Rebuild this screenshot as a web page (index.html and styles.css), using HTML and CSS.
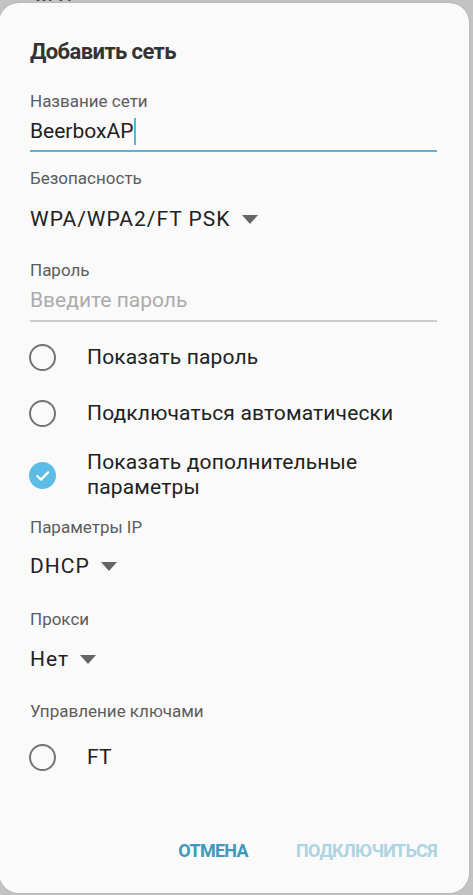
FILE: index.html
```html
<!DOCTYPE html>
<html lang="ru">
<head>
<meta charset="utf-8">
<link rel="stylesheet" href="styles.css">
</head>
<body>
<div class="behind"><span class="behind-text">Wi-Fi</span></div>
<div class="dialog">
  <div class="title">Добавить сеть</div>

  <div class="label first-label">Название сети</div>
  <div class="value input-value">BeerboxAP<span class="cursor"></span></div>
  <div class="line active-line"></div>

  <div class="label sec-label">Безопасность</div>
  <div class="value select">WPA/WPA2/FT PSK<span class="tri"></span></div>

  <div class="label pass-label">Пароль</div>
  <div class="placeholder">Введите пароль</div>
  <div class="line idle-line"></div>

  <div class="radio-row row-first"><span class="radio"></span><span class="radio-text">Показать пароль</span></div>
  <div class="radio-row"><span class="radio"></span><span class="radio-text">Подключаться автоматически</span></div>
  <div class="radio-row tall-row"><span class="radio checked"><svg viewBox="0 0 28 28" width="28" height="28"><path d="M8.5 14.5 L12.5 18.3 L19.8 10.8" fill="none" stroke="#fff" stroke-width="2.4" stroke-linecap="round" stroke-linejoin="round"/></svg></span><span class="radio-text two-line">Показать дополнительные<br>параметры</span></div>

  <div class="label ip-label">Параметры IP</div>
  <div class="value select dhcp">DHCP<span class="tri"></span></div>

  <div class="label proxy-label">Прокси</div>
  <div class="value select proxy">Нет<span class="tri"></span></div>

  <div class="label key-label">Управление ключами</div>
  <div class="radio-row ft-row"><span class="radio"></span><span class="radio-text">FT</span></div>

  <div class="footer">
    <span class="btn btn-cancel">ОТМЕНА</span>
    <span class="btn btn-connect">ПОДКЛЮЧИТЬСЯ</span>
  </div>
</div>
</body>
</html>
```

FILE: styles.css
```css
html, body {
  margin: 0;
  padding: 0;
}
body {
  width: 473px;
  height: 895px;
  overflow: hidden;
  background: #c3c3c3;
  font-family: Roboto, "Noto Sans", sans-serif;
  position: relative;
}
.behind {
  height: 3px;
  overflow: hidden;
  padding-left: 34px;
}
.behind-text {
  display: block;
  font-size: 16px;
  line-height: 16px;
  font-weight: bold;
  color: #444;
  margin-top: -12px;
}
.dialog {
  box-sizing: border-box;
  width: 470px;
  height: 890px;
  margin-left: -1px;
  background: #fafafa;
  border-radius: 20px;
  padding: 36px 32px 30px 31px;
  display: flex;
  flex-direction: column;
  position: relative;
  box-shadow: 0 0 2px rgba(0,0,0,0.15);
}
.title {
  font-size: 22px;
  line-height: 26px;
  font-weight: 700;
  color: #333;
  letter-spacing: -0.6px;
}
.label {
  font-size: 17px;
  line-height: 20px;
  color: #5c5c5c;
}
.first-label { margin-top: 26px; }
.sec-label { margin-top: 16px; }
.pass-label { margin-top: 27px; }
.ip-label { margin-top: 8px; }
.proxy-label { margin-top: 29px; }
.key-label { margin-top: 28px; }

.value {
  font-size: 21px;
  line-height: 28px;
  color: #212121;
  display: flex;
  align-items: center;
}
.input-value { margin-top: 6px; }
.cursor {
  display: inline-block;
  width: 2px;
  height: 27px;
  background: #5ab4d6;
  margin-left: 1px;
}
.line {
  height: 2px;
  margin-top: 5px;
}
.active-line { background: #5ab4d6; }
.idle-line {
  background: #cccccc;
  margin-top: 7px;
}
.select {
  margin-top: 17px;
  letter-spacing: 1px;
}
.dhcp { margin-top: 15px; }
.proxy { margin-top: 16px; }
.tri {
  display: inline-block;
  width: 0;
  height: 0;
  border-left: 8px solid transparent;
  border-right: 8px solid transparent;
  border-top: 9px solid #666;
  margin-left: 11px;
  margin-top: 1px;
}
.placeholder {
  margin-top: 7px;
  font-size: 21px;
  line-height: 26px;
  color: #ababab;
}

.radio-row {
  height: 56px;
  display: flex;
  align-items: center;
}
.row-first { margin-top: 7px; }
.tall-row { height: 68px; }
.ft-row { margin-top: 8px; }
.radio {
  box-sizing: border-box;
  width: 27px;
  height: 27px;
  border-radius: 50%;
  border: 2px solid #737373;
  margin-left: -1px;
  flex: none;
  display: flex;
  align-items: center;
  justify-content: center;
}
.radio.checked {
  border: none;
  background: #5bbde6;
}
.radio.checked svg {
  width: 27px;
  height: 27px;
}
.radio-text {
  margin-left: 31px;
  font-size: 21px;
  line-height: 24px;
  color: #212121;
  letter-spacing: 0.15px;
}
.two-line { line-height: 25px; }

.footer {
  margin-top: auto;
  display: flex;
  justify-content: flex-end;
  gap: 48px;
  line-height: 24px;
}
.btn {
  font-size: 18px;
  font-weight: 700;
  letter-spacing: -0.7px;
}
.btn-cancel { color: #3f98bd; }
.btn-connect { color: #acd4e3; }
```
